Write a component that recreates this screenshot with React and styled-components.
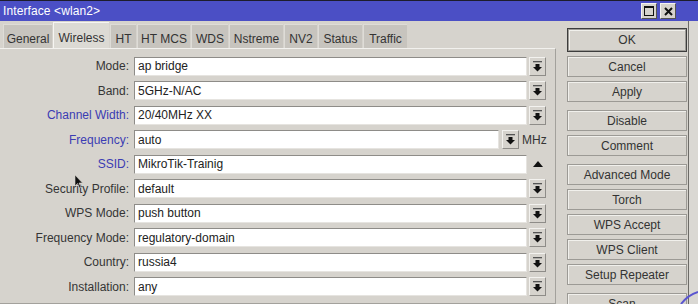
import React from "react";
import styled, { createGlobalStyle } from "styled-components";

const Global = createGlobalStyle`
  html, body { margin: 0; padding: 0; background: #d9d7d2; }
  body { font-family: "Liberation Sans", Arial, sans-serif; font-size: 12px; }
  * { box-sizing: border-box; }
`;

const Window = styled.div`
  position: relative;
  width: 698px;
  height: 304px;
  overflow: hidden;
  background: #d6d3cd;
  display: flex;
  flex-direction: column;
`;

const TitleBar = styled.div`
  height: 21px;
  border-top: 1px solid #1d1d2c;
  background: #4b4fc5;
  display: flex;
  align-items: center;
  padding: 0 0 0 3px;
  color: #ffffff;
  font-size: 12px;
`;

const TitleText = styled.div`
  flex: 1;
  letter-spacing: 0.1px;
`;

const TitleButtons = styled.div`
  display: flex;
  gap: 3px;
  margin-right: 22px;
`;

const TitleButton = styled.div`
  width: 16px;
  height: 16px;
  background: #d6d3cd;
  border: 1px solid #f4f3f0;
  border-right-color: #55544f;
  border-bottom-color: #55544f;
  display: flex;
  align-items: center;
  justify-content: center;
`;

const Body = styled.div`
  flex: 1;
  display: flex;
  min-height: 0;
`;

const LeftArea = styled.div`
  width: 556px;
  display: flex;
  flex-direction: column;
`;

const TabsRow = styled.div`
  margin-top: 1px;
  height: 26px;
  padding-left: 3px;
  display: flex;
  align-items: flex-end;
  position: relative;
  z-index: 1;
`;

const Tab = styled.div`
  width: ${(p) => p.$w}px;
  height: ${(p) => (p.$active ? 26 : 24)}px;
  margin-right: 1px;
  background: ${(p) => (p.$active ? "#dcdad4" : "#c7c4be")};
  border-top: 1px solid ${(p) => (p.$active ? "#f6f5f2" : "#dedcd7")};
  border-left: 1px solid ${(p) => (p.$active ? "#f6f5f2" : "#dedcd7")};
  color: #333333;
  font-size: 12px;
  display: flex;
  align-items: center;
  justify-content: center;
  padding-top: 4px;
`;

const Panel = styled.div`
  flex: 1;
  width: 556px;
  background: #d6d3cd;
  border-top: 1px solid #f2f1ee;
  border-right: 1px solid #a3a19c;
  border-bottom: 1px solid #a3a19c;
  padding-top: 5px;
  display: flex;
  flex-direction: column;
`;

const Row = styled.div`
  height: 24.5px;
  display: flex;
  align-items: center;
`;

const Label = styled.div`
  width: 130px;
  text-align: right;
  padding-right: 1px;
  color: ${(p) => (p.$blue ? "#3b3cb3" : "#353535")};
  font-size: 12px;
  white-space: nowrap;
`;

const Input = styled.div`
  margin-left: 4px;
  width: ${(p) => p.$w}px;
  height: 19px;
  background: #ffffff;
  border-top: 1px solid #8e8c88;
  border-left: 1px solid #8e8c88;
  border-right: 1px solid #e6e4e0;
  border-bottom: 1px solid #e6e4e0;
  padding-left: 3px;
  display: flex;
  align-items: center;
  color: #222222;
  font-size: 12px;
  white-space: nowrap;
`;

const DropButton = styled.div`
  margin-left: ${(p) => p.$ml}px;
  width: 17px;
  height: 19px;
  background: #d6d3cd;
  border: 1px solid #f3f2ef;
  border-right-color: #8e8c88;
  border-bottom-color: #8e8c88;
  display: flex;
  align-items: center;
  justify-content: center;
`;

const Unit = styled.div`
  margin-left: 3px;
  color: #353535;
  font-size: 12px;
`;

const UpArrow = styled.div`
  margin-left: 6px;
  width: 0;
  height: 0;
  border-left: 5px solid transparent;
  border-right: 5px solid transparent;
  border-bottom: 6px solid #111111;
`;

const RightColumn = styled.div`
  margin-left: 11px;
  width: 120px;
  padding-top: 7px;
  display: flex;
  flex-direction: column;
`;

const Group = styled.div`
  display: flex;
  flex-direction: column;
  gap: 4px;
  margin-bottom: ${(p) => p.$mb}px;
`;

const Button = styled.div`
  width: 120px;
  height: ${(p) => (p.$default ? 24 : 21)}px;
  background: #d6d3cd;
  border: 1px solid ${(p) => (p.$default ? "#3d3d3d" : "#9c9a95")};
  box-shadow: ${(p) =>
    p.$default
      ? "inset 0 0 0 1px #9c9a95, inset 2px 2px 0 #f1f0ec"
      : "inset 1px 1px 0 #f1f0ec"};
  color: #333333;
  font-size: 12px;
  display: flex;
  align-items: center;
  justify-content: center;
  white-space: nowrap;
  flex-shrink: 0;
`;

const EdgeStrip = styled.div`
  margin-left: 1px;
  flex: 1;
  border-left: 1px solid #6d6b67;
  background: #dad8d3;
`;

const Cursor = styled.svg`
  position: absolute;
  left: 74px;
  top: 174px;
`;

const Mark = styled.svg`
  position: absolute;
  right: 0;
  bottom: 0;
`;

const DropIcon = () => (
  <svg width="9" height="11" viewBox="0 0 9 11">
    <rect x="0" y="0" width="9" height="1.3" fill="#555" />
    <rect x="2.5" y="3" width="4" height="3" fill="#111" />
    <polygon points="0,6 9,6 4.5,10.5" fill="#111" />
  </svg>
);

const tabs = [
  ["General", 49],
  ["Wireless", 56, true],
  ["HT", 26],
  ["HT MCS", 53],
  ["WDS", 37],
  ["Nstreme", 54],
  ["NV2", 33],
  ["Status", 44],
  ["Traffic", 44],
];

const fields = [
  { label: "Mode", value: "ap bridge", kind: "drop" },
  { label: "Band", value: "5GHz-N/AC", kind: "drop" },
  { label: "Channel Width", value: "20/40MHz XX", kind: "drop", blue: true },
  { label: "Frequency", value: "auto", kind: "freq", blue: true },
  { label: "SSID", value: "MikroTik-Trainig", kind: "up", blue: true },
  { label: "Security Profile", value: "default", kind: "drop" },
  { label: "WPS Mode", value: "push button", kind: "drop" },
  { label: "Frequency Mode", value: "regulatory-domain", kind: "drop" },
  { label: "Country", value: "russia4", kind: "drop" },
  { label: "Installation", value: "any", kind: "drop" },
];

const groups = [
  { items: ["OK", "Cancel", "Apply"], mb: 8 },
  { items: ["Disable", "Comment"], mb: 8 },
  {
    items: ["Advanced Mode", "Torch", "WPS Accept", "WPS Client", "Setup Repeater"],
    mb: 8,
  },
  { items: ["Scan..."], mb: 0 },
];

export default function App() {
  return (
    <>
      <Global />
      <Window>
        <TitleBar>
          <TitleText>Interface &lt;wlan2&gt;</TitleText>
          <TitleButtons>
            <TitleButton>
              <svg width="10" height="10" viewBox="0 0 10 10">
                <rect x="0.5" y="0.5" width="9" height="9" fill="none" stroke="#111" />
                <rect x="0" y="0" width="10" height="2" fill="#111" />
              </svg>
            </TitleButton>
            <TitleButton>
              <svg width="9" height="9" viewBox="0 0 9 9">
                <path d="M1 1 L8 8 M8 1 L1 8" stroke="#111" strokeWidth="2" />
              </svg>
            </TitleButton>
          </TitleButtons>
        </TitleBar>
        <Body>
          <LeftArea>
            <TabsRow>
              {tabs.map(([t, w, a]) => (
                <Tab key={t} $w={w} $active={a}>
                  {t}
                </Tab>
              ))}
            </TabsRow>
            <Panel>
              {fields.map((f) => (
                <Row key={f.label}>
                  <Label $blue={f.blue}>{f.label}:</Label>
                  <Input $w={f.kind === "freq" ? 365 : 393}>{f.value}</Input>
                  {f.kind === "drop" && (
                    <DropButton $ml={2}>
                      <DropIcon />
                    </DropButton>
                  )}
                  {f.kind === "freq" && (
                    <>
                      <DropButton $ml={3}>
                        <DropIcon />
                      </DropButton>
                      <Unit>MHz</Unit>
                    </>
                  )}
                  {f.kind === "up" && <UpArrow />}
                </Row>
              ))}
            </Panel>
          </LeftArea>
          <RightColumn>
            {groups.map((g, i) => (
              <Group key={i} $mb={g.mb}>
                {g.items.map((b) => (
                  <Button key={b} $default={b === "OK"}>
                    {b}
                  </Button>
                ))}
              </Group>
            ))}
          </RightColumn>
          <EdgeStrip />
        </Body>
        <Cursor width="10" height="15" viewBox="0 0 10 15">
          <path d="M1 1 L1 12 L3.5 9.5 L5.5 14 L7 13.3 L5 9 L8.5 9 Z" fill="#111" stroke="#d6d3cd" strokeWidth="0.6" />
        </Cursor>
        <Mark width="18" height="16" viewBox="0 0 18 16">
          <path d="M1 16 Q8 7 18 4" fill="none" stroke="#5a55d0" strokeWidth="2" />
        </Mark>
      </Window>
    </>
  );
}
